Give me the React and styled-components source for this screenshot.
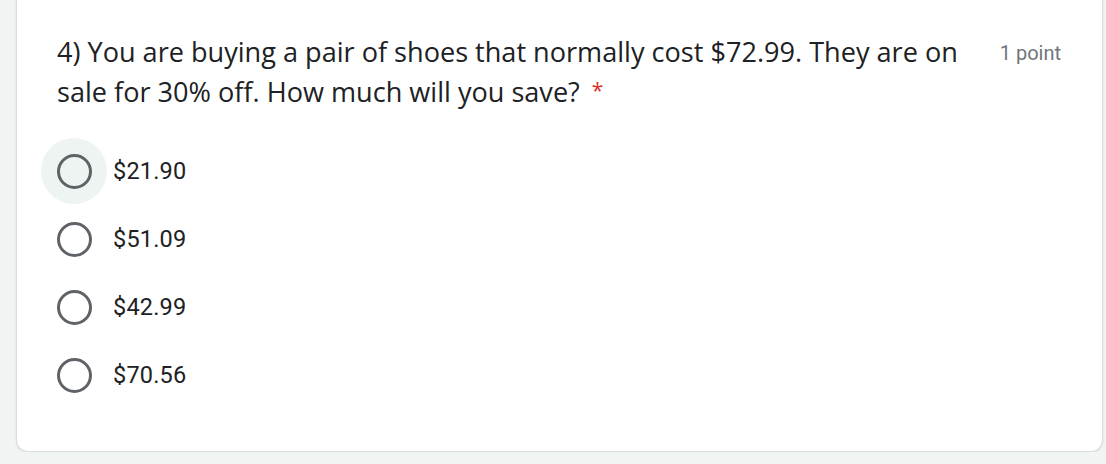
import React from 'react';
import styled, { createGlobalStyle } from 'styled-components';

const Global = createGlobalStyle`
  body {
    margin: 0;
    background: #f0f4f3;
    font-family: Roboto, "Liberation Sans", sans-serif;
    overflow: hidden;
  }
`;

const Card = styled.div`
  margin: -12px 0 0 16px;
  width: 1085px;
  box-sizing: content-box;
  background: #fff;
  border: 1px solid #dadce0;
  border-radius: 12px;
  box-shadow: 0 1px 2px rgba(60, 64, 67, 0.12);
  padding: 43px 0 43px 0;
`;

const Header = styled.div`
  display: flex;
  align-items: flex-start;
  padding: 0 41px 0 40px;
  gap: 24px;
`;

const Title = styled.div`
  flex: 1;
  font-family: "Open Sans", sans-serif;
  font-size: 27.1px;
  line-height: 40px;
  color: #202124;
`;

const Required = styled.span`
  display: inline-block;
  color: #d93025;
  margin-left: 12px;
  font-size: 21px;
  line-height: 16px;
  vertical-align: 4px;
`;

const Points = styled.div`
  font-size: 20px;
  line-height: 42px;
  color: #70757a;
  white-space: nowrap;
`;

const Options = styled.div`
  display: flex;
  flex-direction: column;
  gap: 2px;
  padding: 26px 0 0 24px;
`;

const Row = styled.label`
  display: flex;
  align-items: center;
  height: 66px;
`;

const Halo = styled.span`
  width: 66px;
  height: 66px;
  border-radius: 50%;
  display: flex;
  align-items: center;
  justify-content: center;
  background: ${p => (p.$hover ? '#eef4f2' : 'transparent')};
`;

const Circle = styled.span`
  width: 29px;
  height: 29px;
  border: 3px solid #5f6368;
  border-radius: 50%;
`;

const Label = styled.span`
  margin-left: 6px;
  font-size: 23.5px;
  color: #202124;
  letter-spacing: 0.2px;
`;

const answers = ['$21.90', '$51.09', '$42.99', '$70.56'];

export default function App() {
  return (
    <>
      <Global />
      <Card>
        <Header>
          <Title>
            4) You are buying a pair of shoes that normally cost $72.99. They are on sale for 30% off. How much will you save?
            <Required>*</Required>
          </Title>
          <Points>1 point</Points>
        </Header>
        <Options>
          {answers.map((a, i) => (
            <Row key={a}>
              <Halo $hover={i === 0}>
                <Circle />
              </Halo>
              <Label>{a}</Label>
            </Row>
          ))}
        </Options>
      </Card>
    </>
  );
}
